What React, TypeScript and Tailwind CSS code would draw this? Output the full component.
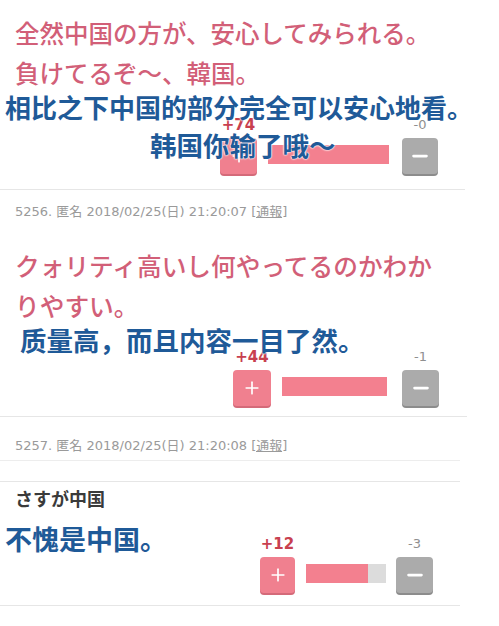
import React from 'react';
import { Plus, Minus } from 'lucide-react';

const jp = "font-['Noto_Sans_CJK_JP','Noto_Sans_CJK_SC',sans-serif] font-medium text-[#d25f78] whitespace-nowrap";
const zh =
  "font-['Noto_Sans_CJK_SC',sans-serif] font-bold text-[#1f5a98] whitespace-nowrap [text-shadow:0_0_2px_#fff,0_0_2px_#fff,0_0_1px_#fff]";
const meta = "font-['DejaVu_Sans','Noto_Sans_CJK_JP',sans-serif] text-[13px] leading-[18px] text-[#9a9a9a] whitespace-nowrap";

interface VoteProps {
  className: string;
  plusW: string;
  barCls: string;
  minusCls: string;
  up: string;
  down: string;
  fill: number;
}

const Vote: React.FC<VoteProps> = ({ className, plusW, barCls, minusCls, up, down, fill }) => (
  <div className={`flex items-end ${className}`}>
    <div className={`flex flex-col items-center ${plusW}`}>
      <span className="h-[14px] font-['DejaVu_Sans',sans-serif] text-[15px] font-bold leading-[14px] text-[#c8404f]">{up}</span>
      <div className="mt-[6px] flex h-[36px] w-full items-center justify-center rounded-[4px] bg-[#f0808f] shadow-[0_2px_0_#d46a79]">
        <Plus className="h-[20px] w-[20px] text-white" strokeWidth={2} />
      </div>
    </div>
    <div className={`mb-[10px] h-[19px] bg-[#dcdcdc] ${barCls}`}>
      <div className="h-full bg-[#f3808f]" style={{ width: `${fill * 100}%` }} />
    </div>
    <div className={`flex flex-col items-center ${minusCls}`}>
      <span className="h-[14px] font-['DejaVu_Sans',sans-serif] text-[13px] leading-[14px] text-[#8f8f8f]">{down}</span>
      <div className="mt-[6px] flex h-[36px] w-full items-center justify-center rounded-[4px] bg-[#ababab] shadow-[0_2px_0_#8c8c8c]">
        <Minus className="h-[22px] w-[22px] text-white" strokeWidth={3} />
      </div>
    </div>
  </div>
);

const Meta: React.FC<{ no: string; time: string }> = ({ no, time }) => (
  <p className={`${meta} pl-[15px]`}>
    {no}. 匿名 2018/02/25(日) {time} <span className="underline">[通報]</span>
  </p>
);

export default function App() {
  return (
    <div className="min-h-[626px] w-[499px] overflow-hidden bg-white">
      <section className="relative w-[465px] border-b border-[#e6e6e6] pt-[13px] pb-[15px]">
        <p className={`${jp} pl-[15px] text-[24.5px] leading-[40px]`}>全然中国の方が、安心してみられる。</p>
        <p className={`${jp} pl-[15px] text-[24.5px] leading-[40px]`}>負けてるぞ〜、韓国。</p>
        <p className={`${zh} relative z-10 pl-[5px] text-[26px] leading-[28px]`}>相比之下中国的部分完全可以安心地看。</p>
        <Vote
          className="-mt-[3px] ml-[220px]"
          plusW="w-[37px]"
          barCls="ml-[11px] w-[121px]"
          minusCls="ml-[13px] w-[36px]"
          up="+74"
          down="-0"
          fill={1}
        />
        <p className={`${zh} absolute top-[131px] left-[150px] z-10 text-[26.5px] leading-[28px]`}>韩国你输了哦～</p>
      </section>

      <section className="w-[467px] border-b border-[#e6e6e6] pt-[13px] pb-[10px]">
        <Meta no="5256" time="21:20:07" />
        <p className={`${jp} mt-[24px] pl-[15px] text-[24.7px] leading-[40px]`}>クォリティ高いし何やってるのかわか</p>
        <p className={`${jp} pl-[15px] text-[24.7px] leading-[40px]`}>りやすい。</p>
        <p className={`${zh} relative z-10 pl-[20px] text-[26.5px] leading-[30px]`}>质量高，而且内容一目了然。</p>
        <Vote
          className="-mt-[5px] ml-[233px]"
          plusW="w-[38px]"
          barCls="ml-[11px] w-[105px]"
          minusCls="ml-[15px] w-[37px]"
          up="+44"
          down="-1"
          fill={1}
        />
      </section>

      <section className="w-[460px] border-b border-[#ededed] pt-[20px] pb-[5px]">
        <Meta no="5257" time="21:20:08" />
      </section>

      <section className="mt-[20px] w-[460px] border-y border-[#e6e6e6] pt-[4px] pb-[12px]">
        <p className="pl-[15px] font-['Noto_Sans_CJK_JP',sans-serif] text-[18px] font-bold leading-[24px] text-[#3a3a3a]">
          さすが中国
        </p>
        <div className="mt-[12px] flex items-start">
          <p className={`${zh} w-[260px] pl-[5px] text-[27px] leading-[34px]`}>不愧是中国。</p>
          <Vote
            className="mt-[15px]"
            plusW="w-[35px]"
            barCls="ml-[11px] w-[80px]"
            minusCls="ml-[10px] w-[37px]"
            up="+12"
            down="-3"
            fill={0.78}
          />
        </div>
      </section>
    </div>
  );
}
